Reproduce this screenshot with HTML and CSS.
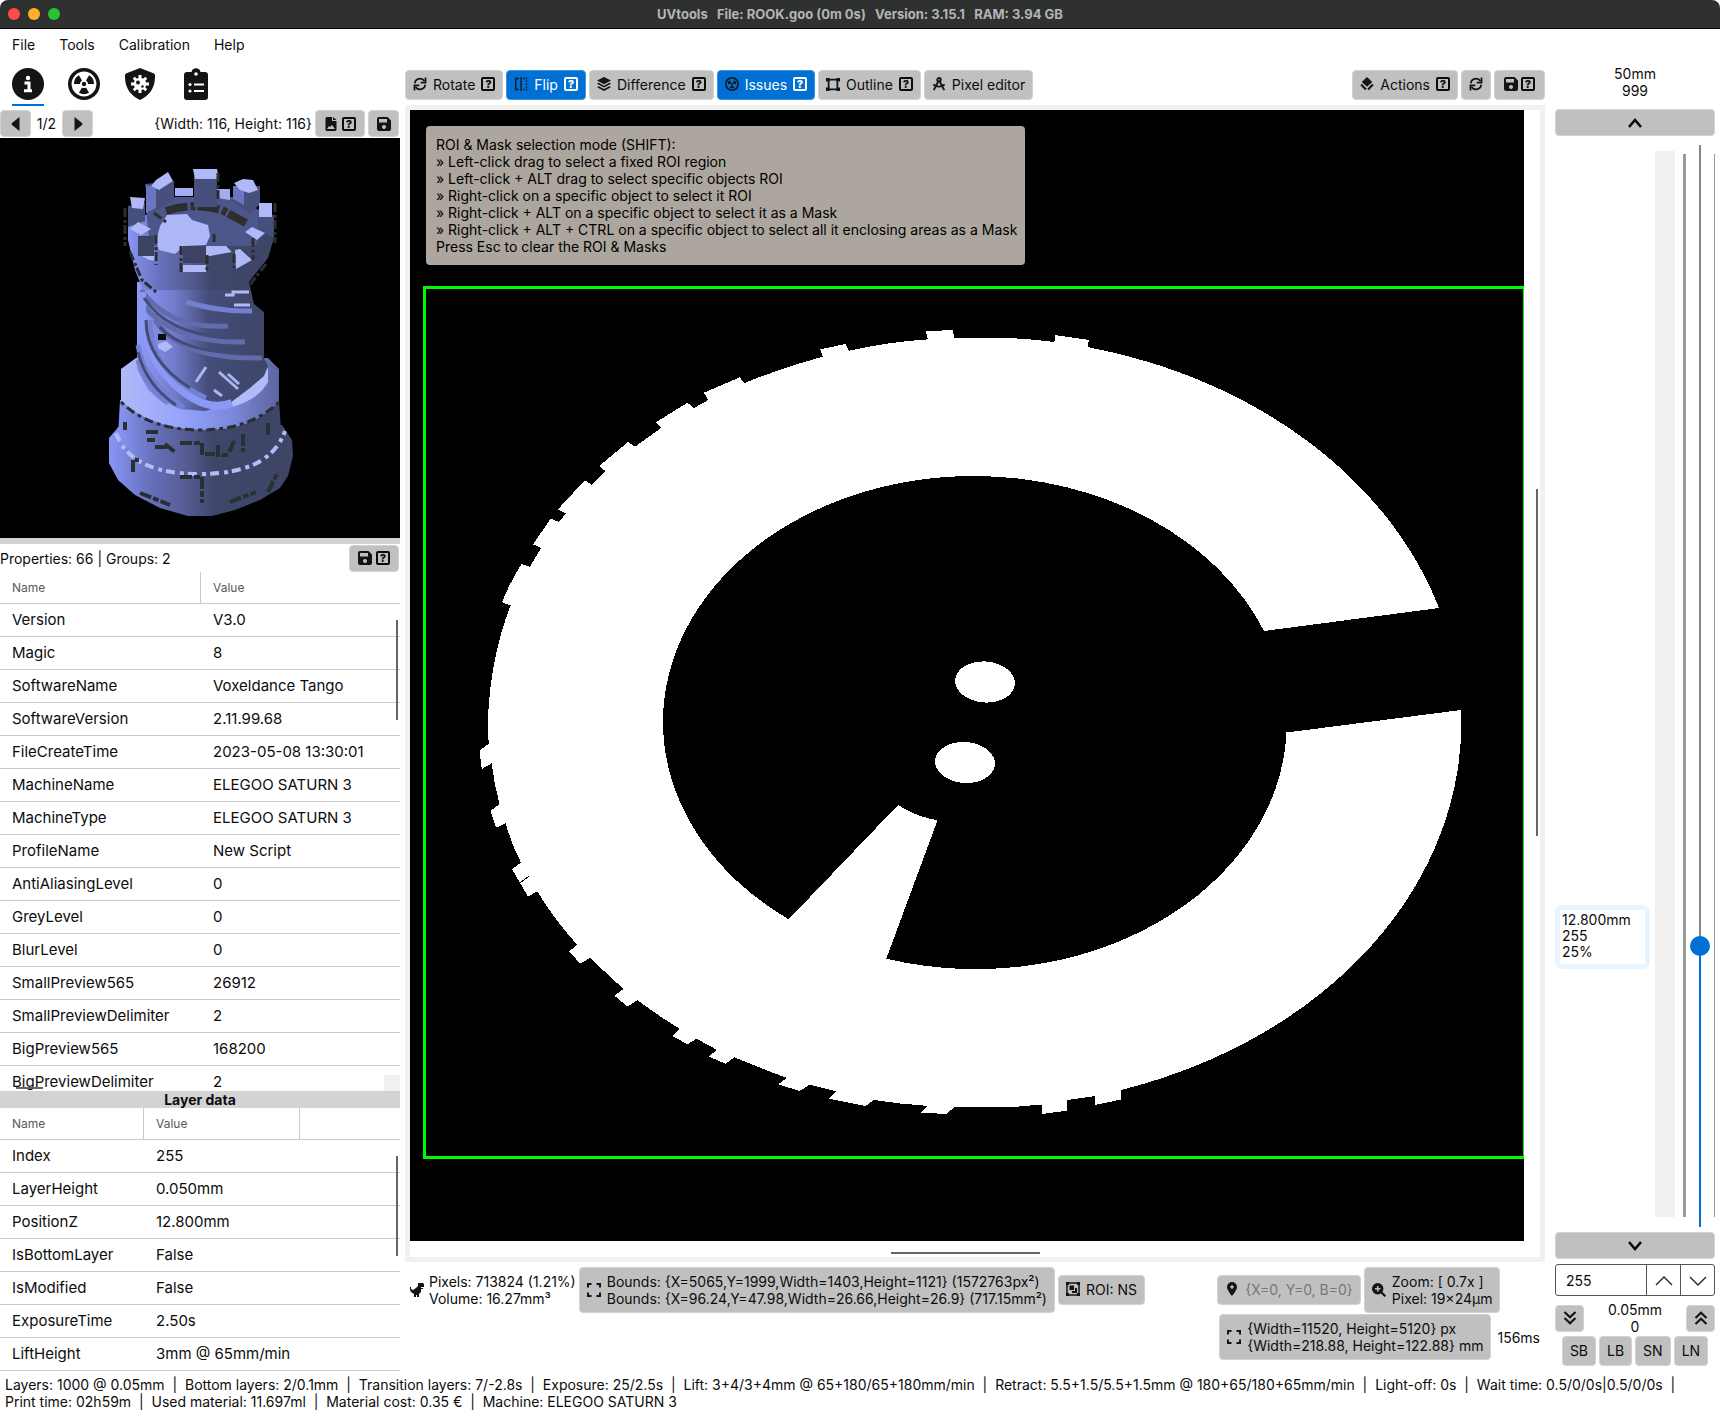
FILE: index.html
```html
<!DOCTYPE html>
<html lang="en">
<head>
<meta charset="utf-8">
<title>UVtools</title>
<link rel="stylesheet" href="styles.css">
</head>
<body>
<svg class="sprite" aria-hidden="true">
  <defs>
    <symbol id="i-info" viewBox="0 0 32 32"><circle cx="16" cy="16" r="16"/><circle cx="16" cy="10" r="2.2" fill="#fff"/><path d="M12.500 15h4.500v7.500M12 22.800h8" fill="none" stroke="#fff" stroke-width="3"/></symbol>
    <symbol id="i-rad" viewBox="0 0 32 32"><circle cx="16" cy="16" r="14.2" fill="none" stroke="currentColor" stroke-width="3.6"/><circle cx="16" cy="16" r="2.2"/><path id="blade" d="M14 19.500L11 24.700A10 10 0 0 0 21 24.700L18 19.500A4 4 0 0 1 14 19.500Z"/><use href="#blade" transform="rotate(120 16 16)"/><use href="#blade" transform="rotate(240 16 16)"/></symbol>
    <symbol id="i-shield" viewBox="0 0 32 32"><path d="M16 0L30 5.500Q31.500 6 31 9C31 20 25 28 16 32C7 28 1 20 1 9Q.5 6 2 5.500Z"/><g stroke="#fff" stroke-width="3"><path d="M16 7v18M7 16h18M9.800 9.800l12.400 12.400M22.200 9.800L9.800 22.200"/></g><circle cx="16" cy="16" r="6.200" fill="#fff"/><circle cx="14" cy="14.500" r="2"/><circle cx="18.500" cy="18.500" r="1.200"/></symbol>
    <symbol id="i-clip" viewBox="0 0 32 32"><path d="M7 4h4.500a4.600 4.600 0 0 1 9 0H25a3 3 0 0 1 3 3v22a3 3 0 0 1-3 3H7a3 3 0 0 1-3-3V7a3 3 0 0 1 3-3Z"/><g fill="#fff"><circle cx="16" cy="6" r="1.800"/><circle cx="10" cy="16.500" r="1.600"/><circle cx="10" cy="23" r="1.600"/><path d="M14 15.500h10v2H14zM14 22h10v2H14z"/></g></symbol>
    <symbol id="i-left" viewBox="0 0 14 14"><path d="M10.500 0v14L3 8Q2 7 3 6Z"/></symbol>
    <symbol id="i-right" viewBox="0 0 14 14"><path d="M3.500 0v14L11 8Q12 7 11 6Z"/></symbol>
    <symbol id="i-save" viewBox="0 0 14 14"><path fill-rule="evenodd" d="M2 0h8.500L14 3.500V12a2 2 0 0 1-2 2H2a2 2 0 0 1-2-2V2a2 2 0 0 1 2-2ZM2 2v3.500h8V2ZM7 8a2 2 0 1 0 .01 0Z"/></symbol>
    <symbol id="i-file" viewBox="0 0 14 14"><path fill-rule="evenodd" d="M3 0h5v4h4.500v8.500A1.500 1.500 0 0 1 11 14H3a1.500 1.500 0 0 1-1.500-1.500v-11A1.500 1.500 0 0 1 3 0ZM9 0l3.500 3H9ZM3 12h8L8 8l-2 2-1-1Z"/></symbol>
    <symbol id="i-sync" viewBox="0 0 24 24"><g fill="none" stroke="currentColor" stroke-width="3"><path d="M3 11A9 9 0 0 1 19.500 7M21.500 1v8.500H13M21 13A9 9 0 0 1 4.500 17M2.500 23v-8.500H11"/></g></symbol>
    <symbol id="i-flip" viewBox="0 0 14 14"><g fill="none" stroke="currentColor" stroke-width="1.300"><path d="M5 1.500H1.700v11H5M7 0v14"/><path d="M9 1.500h3.500v11H9" stroke-dasharray="1.500 1.300"/></g></symbol>
    <symbol id="i-layers" viewBox="0 0 16 16"><path d="M8 0l8 4-8 4.200L0 4ZM2 6.700l6 3.200 6-3.200 2 1.100-8 4.200-8-4.200ZM2 10.600l6 3.200 6-3.200 2 1.200L8 16 0 11.800Z"/></symbol>
    <symbol id="i-outline" viewBox="0 0 16 16"><path d="M0 1h4v4H0zM12 1h4v4h-4zM0 12h4v4H0zM12 12h4v4h-4z"/><path d="M3 3h10M3 14h10M3 3v11M13 3v11" stroke="currentColor" stroke-width="2" fill="none"/></symbol>
    <symbol id="i-compass" viewBox="0 0 16 16"><g fill="none" stroke="currentColor" stroke-width="2.200"><circle cx="8" cy="3.200" r="2"/><path d="M7.200 5L2 15M8.800 5L14 15M1.500 8.500Q8 13.500 14.500 8.500"/></g></symbol>
    <symbol id="i-actions" viewBox="0 0 16 16"><path d="M8 0l6 5.800-6 5.200-6-5.200Z"/><path d="M1.200 8.600l5.600 5.600M9.200 14.200l5.600-5.600" fill="none" stroke="currentColor" stroke-width="2.400"/></symbol>
    <symbol id="i-up" viewBox="0 0 14 10"><path d="M1 9l6-7 6 7" fill="none" stroke="currentColor" stroke-width="2.600"/></symbol>
    <symbol id="i-down" viewBox="0 0 14 10"><path d="M1 1l6 7 6-7" fill="none" stroke="currentColor" stroke-width="2.600"/></symbol>
    <symbol id="i-dup" viewBox="0 0 14 14"><path d="M1.500 7L7 1.800 12.500 7M1.500 13L7 7.800 12.500 13" fill="none" stroke="currentColor" stroke-width="2.200"/></symbol>
    <symbol id="i-ddown" viewBox="0 0 14 14"><path d="M1.500 1L7 6.200 12.500 1M1.500 7L7 12.200 12.500 7" fill="none" stroke="currentColor" stroke-width="2.200"/></symbol>
    <symbol id="i-expand" viewBox="0 0 14 14"><path d="M1 4.500V1h3.500M9.500 1H13v3.500M13 9.500V13H9.500M4.500 13H1V9.500" fill="none" stroke="currentColor" stroke-width="2"/></symbol>
    <symbol id="i-dino" viewBox="0 0 14 14"><path d="M8 0h5l1 1v3h-3v1h2v1h-2v3l-2 2v3H7v-2H6v2H4v-3L1 9 0 7V4h1v2l2 1 3-2 2-2Z"/></symbol>
    <symbol id="i-roi" viewBox="0 0 14 14"><rect x="1" y="1" width="12" height="12" fill="none" stroke="currentColor" stroke-width="1.500"/><path d="M0 0h3v3H0zM11 0h3v3h-3zM0 11h3v3H0zM11 11h3v3h-3zM3.500 3.500H8V8H3.500zM9 6h2v5H6V9h3z"/></symbol>
    <symbol id="i-pin" viewBox="0 0 14 14"><path fill-rule="evenodd" d="M7 0a5 5 0 0 1 5 5c0 3-5 9-5 9S2 8 2 5a5 5 0 0 1 5-5ZM7 3.300a1.700 1.700 0 1 0 .01 0Z"/></symbol>
    <symbol id="i-zoom" viewBox="0 0 14 14"><circle cx="5.700" cy="5.700" r="5.700"/><path d="M9 9l4.300 4.300" stroke="currentColor" stroke-width="2.200"/><path d="M5.700 3v5.400M3 5.700h5.400" stroke="#c0c0c0" stroke-width="1.500"/></symbol>
  </defs>
</svg>

<header class="titlebar">
  <span class="light red"></span><span class="light amber"></span><span class="light green"></span>
  <h1 class="title">UVtools&nbsp;&nbsp; File: ROOK.goo (0m 0s)&nbsp;&nbsp; Version: 3.15.1&nbsp;&nbsp; RAM: 3.94 GB</h1>
</header>
<nav class="menubar"><a href="#">File</a><a href="#">Tools</a><a href="#">Calibration</a><a href="#">Help</a></nav>

<main class="workspace">
  <aside class="side">
    <div class="tabs">
      <button class="tab active" aria-label="Information"><svg><use href="#i-info"/></svg></button>
      <button class="tab" aria-label="Issues"><svg><use href="#i-rad"/></svg></button>
      <button class="tab" aria-label="Suggestions"><svg><use href="#i-shield"/></svg></button>
      <button class="tab" aria-label="Log"><svg><use href="#i-clip"/></svg></button>
    </div>
    <div class="thumb-bar">
      <button class="btn small nav" aria-label="Previous"><svg class="icon"><use href="#i-left"/></svg></button>
      <span class="page">1/2</span>
      <button class="btn small nav" aria-label="Next"><svg class="icon"><use href="#i-right"/></svg></button>
      <span class="dims">{Width: 116, Height: 116}</span>
      <button class="btn small wide" aria-label="Export image"><svg class="icon"><use href="#i-file"/></svg><span class="help">?</span></button>
      <button class="btn small nav" aria-label="Save"><svg class="icon"><use href="#i-save"/></svg></button>
    </div>
    <svg class="preview" viewBox="0 138 400 400" role="img" aria-label="Rook preview">
      <defs>
        <linearGradient id="g1"><stop offset="0" stop-color="#8896f4"/><stop offset=".22" stop-color="#6670bb"/><stop offset=".42" stop-color="#565c92"/><stop offset=".58" stop-color="#3e466a"/><stop offset="1" stop-color="#3e4566"/></linearGradient>
        <linearGradient id="g2"><stop offset="0" stop-color="#b0baf8"/><stop offset=".4" stop-color="#94a2fb"/><stop offset=".7" stop-color="#7c88dc"/><stop offset="1" stop-color="#5d659f"/></linearGradient>
        <linearGradient id="g3"><stop offset="0" stop-color="#8e9cfa"/><stop offset=".3" stop-color="#6f7ac8"/><stop offset=".55" stop-color="#454c78"/><stop offset="1" stop-color="#3e4566"/></linearGradient>
      </defs>
      <path d="M109 438L120 425H282L292 440 293 456 288 476 280 488 260 500 235 510 212 516H188L160 508 135 495 118 480 109 463Z" fill="url(#g1)"/>
      <path d="M120 400H279L281 430 273 447 256 461 230 472 200 475 165 471 135 457 118 438Z" fill="url(#g1)"/>
      <path d="M116 433Q130 474 200 474T285 431" fill="none" stroke="#b2bdf7" stroke-width="4" stroke-dasharray="9 5 4 4"/>
      <path d="M121 369L136 358H268L279 369V402Q252 430 208 430 150 430 121 400Z" fill="url(#g2)"/>
      <path d="M268 368V382Q258 400 232 407V390Z" fill="#b0bbf8"/>
      <path d="M121 402Q150 430 200 430T279 402" fill="none" stroke="#2a2f30" stroke-width="3" stroke-dasharray="4 4 9 4"/>
      <path d="M137 282H249L254 304 264 312V358L268 366 264 376 250 388 230 403 205 411 180 409 160 400 148 390 137 370Z" fill="url(#g3)"/>
      <g fill="none" stroke-width="5">
        <path d="M141 290Q170 330 228 326M144 306Q175 344 245 342M155 320Q180 360 262 358" stroke="#626bab"/>
        <path d="M186 302Q220 312 252 311" stroke="#7480cf"/>
        <path d="M142 292Q139 350 172 382T232 403" stroke="#8b99f5" stroke-width="8"/>
        <path d="M138 345Q144 382 184 408M138 360Q145 387 168 403M150 320Q150 372 206 398" stroke="#7481d2"/>
        <path d="M146 320Q146 360 190 388M138 352Q146 385 176 405M144 298Q168 334 222 336M160 327Q182 352 240 353" stroke="#444b78" stroke-width="3"/>
        <path d="M196 382L206 367M219 372L238 389M214 390L222 396M228 374L239 384" stroke="#aab5f4" stroke-width="3"/>
      </g>
      <path d="M158 334h8v6h-8z"/><path d="M158 344l8-3 7 6-8 5-7-4Z" fill="#b0baf8"/>
      <path d="M225 295h8v-3h16M234 305h16" fill="none" stroke="#b0baf8" stroke-width="3"/>
      <path d="M128 215H274V238L268 258 252 278 243 290H143L135 270 128 240Z" fill="url(#g1)"/>
      <path d="M146 210L175 197H236L268 215 255 246H150Z" fill="#4d568b"/>
      <path d="M175 196V188H193V196M217 198V189H230V200" fill="#a2aef0"/>
      <path d="M166 211Q192 202 222 210L246 223" fill="none" stroke="#2b2f2f" stroke-width="8" stroke-dasharray="22 3 5 2"/>
      <path d="M160 226l7-11 20-1 5 6 16 5 2 11-4 9-22 1-9 8-16-4-3-9Z" fill="#aeb8f7"/>
      <path d="M194 176h23v31h-23zM145 184l29-3v19l-23 13zM233 186h27v18l-10 10-17-12zM128 206l17-3v18l-17 6zM258 215h16v22l-16-6z" fill="#47507c"/>
      <path d="M233 186h11v19l-11-6zM146 185l10 3v20l-10 5z" fill="#6b76c2"/>
      <path d="M193 169h24l2 10h-24zM151 186l5-6 12-8 5 9-14 9ZM234 183l9-4 10 1 5 10-9 3-9-3ZM130 197l15 1-2 11-11-1ZM259 203h13v14h-13ZM130 229l8-7 13 7-10 6ZM142 256l11-8 4 13-8-1ZM206 246h20l6 6-22 4h-4ZM183 265h23v7h-23ZM245 232l7-5 13 6-8 7ZM235 250l5-1 12 11-16 9Z" fill="#afb9f7"/>
      <path d="M138 236h16v20h-16zM183 246h23v17h-23z" fill="#3b4262"/>
      <path d="M156 235v30M181 246v26M207 255v16M234 254v14M253 238v22M218 173v28M154 213l12 9M214 234v8M125 208v38M275 203v40M130 252l12 28 14 12M266 264l-17 22" fill="none" stroke="#292e30" stroke-width="3" stroke-dasharray="9 3 3 2"/>
      <path d="M146 432h14M147 440h8M155 447h14M165 444l10 8M180 443h22v14M205 454h10M218 445v10h10M234 441l-5 12M243 434v18M268 423v12M180 477h22v26M133 472v-12h6M125 422v8M268 492l10-20M140 493l30 12M230 502l26-10" fill="none" stroke="#2a2f31" stroke-width="4" stroke-dasharray="12 2 6 2"/>
    </svg>
    <div class="splitter"></div>
    <div class="prop-bar"><span>Properties: 66 | Groups: 2</span>
      <button class="btn small wide" aria-label="Save properties"><svg class="icon"><use href="#i-save"/></svg><span class="help">?</span></button></div>
    <section class="grid-wrap grow">
      <table class="data props">
        <thead><tr><th>Name</th><th>Value</th></tr></thead>
        <tbody>
          <tr><td>Version</td><td>V3.0</td></tr>
          <tr><td>Magic</td><td>8</td></tr>
          <tr><td>SoftwareName</td><td>Voxeldance Tango</td></tr>
          <tr><td>SoftwareVersion</td><td>2.11.99.68</td></tr>
          <tr><td>FileCreateTime</td><td>2023-05-08 13:30:01</td></tr>
          <tr><td>MachineName</td><td>ELEGOO SATURN 3</td></tr>
          <tr><td>MachineType</td><td>ELEGOO SATURN 3</td></tr>
          <tr><td>ProfileName</td><td>New Script</td></tr>
          <tr><td>AntiAliasingLevel</td><td>0</td></tr>
          <tr><td>GreyLevel</td><td>0</td></tr>
          <tr><td>BlurLevel</td><td>0</td></tr>
          <tr><td>SmallPreview565</td><td>26912</td></tr>
          <tr><td>SmallPreviewDelimiter</td><td>2</td></tr>
          <tr><td>BigPreview565</td><td>168200</td></tr>
          <tr><td>BigPreviewDelimiter</td><td>2</td></tr>
        </tbody>
      </table>
      <span class="scroll-v"></span><span class="scroll-h"></span><span class="corner"></span>
    </section>
    <h2 class="section-title">Layer data</h2>
    <section class="grid-wrap">
      <table class="data layer">
        <thead><tr><th>Name</th><th>Value</th><th></th></tr></thead>
        <tbody>
          <tr><td>Index</td><td colspan="2">255</td></tr>
          <tr><td>LayerHeight</td><td colspan="2">0.050mm</td></tr>
          <tr><td>PositionZ</td><td colspan="2">12.800mm</td></tr>
          <tr><td>IsBottomLayer</td><td colspan="2">False</td></tr>
          <tr><td>IsModified</td><td colspan="2">False</td></tr>
          <tr><td>ExposureTime</td><td colspan="2">2.50s</td></tr>
          <tr><td>LiftHeight</td><td colspan="2">3mm @ 65mm/min</td></tr>
        </tbody>
      </table>
      <span class="scroll-v"></span>
    </section>
  </aside>

  <section class="center">
    <div class="toolbar">
      <button class="btn"><svg class="icon"><use href="#i-sync"/></svg>Rotate<span class="help">?</span></button>
      <button class="btn on"><svg class="icon"><use href="#i-flip"/></svg>Flip<span class="help">?</span></button>
      <button class="btn"><svg class="icon"><use href="#i-layers"/></svg>Difference<span class="help">?</span></button>
      <button class="btn on"><svg class="icon"><use href="#i-rad"/></svg>Issues<span class="help">?</span></button>
      <button class="btn"><svg class="icon"><use href="#i-outline"/></svg>Outline<span class="help">?</span></button>
      <button class="btn"><svg class="icon"><use href="#i-compass"/></svg>Pixel editor</button>
      <span class="spring"></span>
      <button class="btn"><svg class="icon"><use href="#i-actions"/></svg>Actions<span class="help">?</span></button>
      <button class="btn" aria-label="Refresh"><svg class="icon"><use href="#i-sync"/></svg></button>
      <button class="btn tight" aria-label="Save layer"><svg class="icon"><use href="#i-save"/></svg><span class="help">?</span></button>
    </div>
    <div class="viewer">
      <svg class="slice" viewBox="410 110 1114 1131" preserveAspectRatio="xMinYMin slice" role="img" aria-label="Layer 255" shape-rendering="crispEdges">
        <path fill="#000" d="M410 110h1114v1131H410z"/>
        <path fill="#fff" d="M925.500 331.300L953 330 954 337.700 1008 338Q1032 339 1054.400 342L1055 335 1089 340 1087.600 347A487 385 0 0 1 1439 608L1264 631A313 246 0 0 0 974 476A311 246 0 0 0 663 722 311 246 0 0 0 788.700 919.300L898 805Q917 817 937.500 820.300L886.300 958.700A311 246 0 0 0 1286.500 732.500L1461 710A487 385 0 0 1 1121 1090V1099.500L1095 1105V1096L1067 1100V1110.700L1042 1114V1104.500L1013 1107H954.400L946.600 1114 921 1112.700 928 1106Q900 1104 874 1100L865.500 1106 828.600 1098.700 836.400 1091.300 809.500 1084.700 799.600 1091 778 1084.300 787 1078Q760 1068 734.500 1057.300L725.400 1063.700 709 1056.700 716.700 1049.700 696.400 1038.700 687.700 1044.300 672 1036 680 1029Q657 1015 637.400 1000L627.800 1006.700 614.400 995.700 623.500 989 590 958 580 963.700 569.300 951.300 577 944.700Q554 919 537.200 891.300L528 896.700 512 869 521 862.700Q511 843 505.600 823.300L496 827.700 490.400 811 499.500 804Q494 784 491.700 763.300L481.700 769 479.500 750.300 488.600 744 488 717Q491 655 510.700 605.300L502 602.300Q510 582 521.400 564L530 566.700 541 548 533 544.300 550.700 518.700 559 522 566 513.300 558 509.300 584.700 480.300 591.400 484.700 605.600 471.300 599.300 466 628 442 635 446.700 661 428 655.800 422.300 687.500 402.700 693.800 408 708.400 400 704 392.700 739.700 377.300 744.400 383Q784 367 822.700 356.700L820.300 349.300 845.600 344 848.800 350.700Q888 342 928 339.300Z"/>
        <ellipse cx="985" cy="682" rx="30" ry="20.500" fill="#fff" transform="rotate(4 985 682)"/>
        <ellipse cx="965" cy="762.500" rx="30" ry="20.500" fill="#fff" transform="rotate(4 965 762.500)"/>
        <path d="M520 883l9-7" stroke="#000" fill="none"/>
        <path d="M1524 287.500H424.500V1157.500H1524" fill="none" stroke="#00fa00" stroke-width="3"/><path d="M1523.500 287v872" stroke="#00fa00" fill="none"/>
      </svg>
      <div class="hint">ROI &amp; Mask selection mode (SHIFT):<br>» Left-click drag to select a fixed ROI region<br>» Left-click + ALT drag to select specific objects ROI<br>» Right-click on a specific object to select it ROI<br>» Right-click + ALT on a specific object to select it as a Mask<br>» Right-click + ALT + CTRL on a specific object to select all it enclosing areas as a Mask<br>Press Esc to clear the ROI &amp; Masks</div>
      <span class="vbar"></span><span class="hbar"></span>
    </div>
    <div class="info">
      <div class="info-row">
        <span class="pixels"><svg class="icon"><use href="#i-dino"/></svg><span>Pixels: 713824 (1.21%)<br>Volume: 16.27mm³</span></span>
        <button class="btn tall"><svg class="icon"><use href="#i-expand"/></svg><span>Bounds: {X=5065,Y=1999,Width=1403,Height=1121} (1572763px²)<br>Bounds: {X=96.24,Y=47.98,Width=26.66,Height=26.9} (717.15mm²)</span></button>
        <button class="btn"><svg class="icon"><use href="#i-roi"/></svg>ROI: NS</button>
      </div>
      <div class="info-col">
        <div class="info-row">
          <button class="btn muted"><svg class="icon"><use href="#i-pin"/></svg>{X=0, Y=0, B=0}</button>
          <button class="btn tall"><svg class="icon"><use href="#i-zoom"/></svg><span>Zoom: [ 0.7x ]<br>Pixel: 19×24µm</span></button>
        </div>
        <div class="info-row second">
          <button class="btn tall"><svg class="icon"><use href="#i-expand"/></svg><span>{Width=11520, Height=5120} px<br>{Width=218.88, Height=122.88} mm</span></button>
          <span class="ms">156ms</span>
        </div>
      </div>
    </div>
  </section>

  <aside class="layers">
    <div class="limit">50mm<br>999</div>
    <button class="btn small" aria-label="Next layer"><svg class="chev"><use href="#i-up"/></svg></button>
    <div class="slider-area">
      <output class="bubble" for="layer">12.800mm<br>255<br>25%</output>
      <span class="heat"></span><span class="ticks"></span>
      <input class="slider" id="layer" type="range" min="0" max="999" value="255" aria-label="Layer">
      <span class="edge"></span>
    </div>
    <button class="btn small" aria-label="Previous layer"><svg class="chev"><use href="#i-down"/></svg></button>
    <div class="number"><input type="number" value="255" aria-label="Layer number"><button aria-label="Increase"><svg viewBox="0 0 18 10"><path d="M1 9l8-8 8 8"/></svg></button><button aria-label="Decrease"><svg viewBox="0 0 18 10"><path d="M1 1l8 8 8-8"/></svg></button></div>
    <div class="bottom-limit">
      <button class="btn small square" aria-label="First layer"><svg class="icon"><use href="#i-ddown"/></svg></button>
      <span>0.05mm<br>0</span>
      <button class="btn small square" aria-label="Last layer"><svg class="icon"><use href="#i-dup"/></svg></button>
    </div>
    <div class="jumps"><button class="btn">SB</button><button class="btn">LB</button><button class="btn">SN</button><button class="btn">LN</button></div>
  </aside>
</main>

<footer class="status">Layers: 1000 @ 0.05mm  |  Bottom layers: 2/0.1mm  |  Transition layers: 7/-2.8s  |  Exposure: 25/2.5s  |  Lift: 3+4/3+4mm @ 65+180/65+180mm/min  |  Retract: 5.5+1.5/5.5+1.5mm @ 180+65/180+65mm/min  |  Light-off: 0s  |  Wait time: 0.5/0/0s|0.5/0/0s  |
Print time: 02h59m  |  Used material: 11.697ml  |  Material cost: 0.35 €  |  Machine: ELEGOO SATURN 3</footer>
</body>
</html>
```
FILE: styles.css
```css
* { box-sizing: border-box; }
body {
  margin: 0;
  height: 100vh;
  display: flex;
  flex-direction: column;
  overflow: hidden;
  background: #fff;
  color: #0c0c0c;
  font: 14px/17px Inter, "Liberation Sans", sans-serif;
}
button, input { font: inherit; color: inherit; }
.sprite { position: absolute; width: 0; height: 0; }
svg { fill: currentColor; }

.titlebar {
  display: flex;
  align-items: center;
  gap: 8px;
  height: 29px;
  flex: none;
  padding: 0 8px;
  position: relative;
  background: #2f3130;
  border-bottom: 1px solid #000;
  border-radius: 8px 8px 0 0;
}
.light { width: 12px; height: 12px; border-radius: 50%; }
.red { background: #ff4b4a; }
.amber { background: #ffb025; }
.green { background: #2ac231; }
.title {
  position: absolute;
  inset: 0;
  margin: 0;
  text-align: center;
  font-size: 13px;
  line-height: 28px;
  font-weight: 700;
  color: #b4b5b5;
}
.menubar { display: flex; gap: 24px; height: 32px; flex: none; align-items: center; padding: 0 12px 2px; }
.menubar a { color: inherit; text-decoration: none; }

.workspace {
  flex: 1;
  min-height: 0;
  display: grid;
  grid-template-columns: 400px minmax(0, 1fr) 160px;
  grid-template-rows: minmax(0, 1fr);
  padding-right: 5px;
}

.btn {
  display: inline-flex;
  align-items: center;
  justify-content: center;
  gap: 6px;
  height: 30px;
  flex: none;
  padding: 0 7px 2px;
  border: 1px solid #d2d2d2;
  border-radius: 4px;
  background: #c0c0c0;
  white-space: nowrap;
  text-align: left;
}
.btn.small { height: 27px; padding: 0; gap: 4px; }
.btn.nav { width: 31px; }
.btn.square { width: 29px; }
.btn.wide { width: 50px; }
.btn.tight { gap: 3px; padding: 0 9px 2px; }
.btn.tall { height: 46px; padding: 0 7px; }
.btn.on { background: #0070d4; border-color: #3a93de; color: #fff; }
.btn.muted { color: #777; }
.icon { width: 14px; height: 14px; flex: none; color: #141414; }
.help {
  width: 14px;
  height: 14px;
  flex: none;
  border: 2px solid currentColor;
  border-radius: 2px;
  font-size: 11px;
  line-height: 10px;
  font-weight: 800;
  text-align: center;
}
.chev { width: 14px; height: 10px; }

.side { display: flex; flex-direction: column; min-height: 0; padding-bottom: 5px; }
.tabs { display: flex; gap: 24px; height: 48px; flex: none; padding: 7px 12px 0; }
.tab { width: 32px; height: 38px; padding: 0; border: 0; border-bottom: 2px solid transparent; background: none; color: #141414; }
.tab svg { display: block; width: 32px; height: 32px; margin-bottom: 4px; }
.tab.active { border-color: #0070d4; }
.thumb-bar { display: flex; align-items: center; height: 29px; flex: none; gap: 3px; padding-right: 1px; }
.thumb-bar .page { width: 25px; text-align: center; }
.dims { margin-left: auto; }
.preview { width: 100%; aspect-ratio: 1; flex: none; background: #000; }
.splitter { height: 6px; flex: none; background: #d3d3d3; }
.prop-bar { display: flex; align-items: center; justify-content: space-between; height: 28px; flex: none; padding-right: 1px; }

.grid-wrap { position: relative; overflow: hidden; flex: none; }
.grid-wrap.grow { flex: 1; min-height: 0; }
.data { width: 100%; table-layout: fixed; border-collapse: separate; border-spacing: 0; font-size: 15px; }
.data th, .data td { padding: 0 12px; text-align: left; border-bottom: 1px solid #cacaca; white-space: nowrap; }
.data td { height: 33px; padding-bottom: 2px; }
.data th { height: 32px; font-size: 12px; font-weight: 400; color: #595959; border-right: 1px solid #cacaca; }
.data th:last-child { border-right: 0; }
.props th:first-child { width: 201px; }
.layer th:first-child { width: 144px; }
.layer th:nth-child(2) { width: 156px; }
.scroll-v { position: absolute; top: 48px; right: 2px; width: 2px; height: 100px; background: #666; }
.scroll-h { position: absolute; left: 16px; bottom: 2px; width: 27px; height: 2px; background: #666; }
.corner { position: absolute; right: 0; bottom: 0; width: 16px; height: 16px; background: #f0f0f0; }
.section-title { margin: 0; flex: none; background: #d3d3d3; font-size: 14px; line-height: 17px; text-align: center; font-weight: 700; }

.center { display: flex; flex-direction: column; min-height: 0; margin: 0 10px 0 5px; padding-bottom: 16px; }
.toolbar { display: flex; gap: 3px; padding: 9px 0 5px; flex: none; }
.spring { flex: 1; }
.viewer { position: relative; flex: 1; min-height: 0; border: 5px solid #f1f1f1; padding: 0 16px 16px 0; }
.slice { display: block; width: 100%; height: 100%; }
.hint {
  position: absolute;
  left: 16px;
  top: 16px;
  padding: 10px 8px 10px 10px;
  border-radius: 4px;
  background: #aca69e;
  color: #000;
  white-space: nowrap;
}
.vbar { position: absolute; right: 2px; top: 33%; width: 2px; height: 347px; background: #666; }
.hbar { position: absolute; left: 481px; bottom: 3px; width: 149px; height: 2px; background: #666; }
.info { display: flex; justify-content: space-between; align-items: flex-start; padding: 5px 5px 0 5px; flex: none; }
.info-row { display: flex; align-items: center; gap: 3px; }
.info-col { display: flex; flex-direction: column; gap: 1px; }
.second { padding-left: 2px; gap: 6px; }
.pixels { display: flex; align-items: center; gap: 5px; }

.layers { display: flex; flex-direction: column; min-height: 0; padding: 4px 0 10px; }
.limit { text-align: center; margin-bottom: 10px; }
.slider-area { position: relative; flex: 1; min-height: 0; display: flex; justify-content: flex-end; margin: 9px 0 5px; }
.heat { width: 20px; margin: 6px 8px 10px 0; background: #f1f1f1; }
.ticks { width: 3px; margin: 9px 4px 10px 0; background: #999; }
.slider {
  writing-mode: vertical-lr;
  direction: rtl;
  appearance: none;
  width: 20px;
  height: 100%;
  margin: 0 4px 0 0;
  background: linear-gradient(to top, #0070d4 26%, #868686 26%) center / 2px 100% no-repeat;
}
.slider::-webkit-slider-thumb { appearance: none; width: 20px; height: 20px; border-radius: 50%; background: #0070d4; }
.edge { width: 1px; margin: 9px 0 10px; background: #999; }
.bubble {
  position: absolute;
  left: 0;
  bottom: 258px;
  width: 95px;
  border: 5px solid #e8f5ff;
  border-radius: 7px;
  padding: 2px 2px 4px;
  background: #fff;
  line-height: 16px;
}
.number { display: flex; height: 32px; flex: none; margin: 5px 0; border: 1px solid #555; border-radius: 3px; }
.number input { flex: 1; min-width: 0; border: 0; padding: 0 10px; background: none; appearance: textfield; }
.number input::-webkit-inner-spin-button { display: none; }
.number button { width: 34px; padding: 0; border: 0; border-left: 1px solid #555; background: none; }
.number svg { width: 18px; height: 10px; fill: none; stroke: #222; stroke-width: 1.3; }
.bottom-limit { display: flex; justify-content: space-between; align-items: center; height: 34px; flex: none; text-align: center; }
.jumps { display: flex; justify-content: center; gap: 3px; margin-top: 1px; }

.status { flex: none; height: 39px; padding: 0 5px; white-space: pre; overflow: hidden; }
```
